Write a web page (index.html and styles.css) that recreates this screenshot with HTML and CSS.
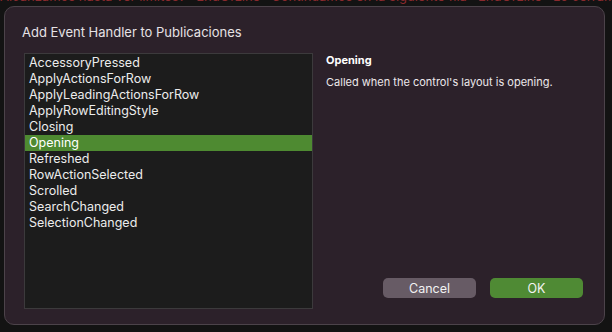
FILE: index.html
```html
<!DOCTYPE html>
<html lang="en">
<head>
  <meta charset="utf-8" />
  <title>Add Event Handler</title>
  <link rel="stylesheet" href="styles.css">
</head>
<body>
  <div class="backdrop-text">Alcanzamos hasta ver límites? · EndOfLine · Continuamos en la siguiente fila · EndOfLine · Lo cerramos</div>

  <div class="dialog">
    <div class="title">Add Event Handler to Publicaciones</div>

    <div class="content">
      <ul class="events">
        <li>AccessoryPressed</li>
        <li>ApplyActionsForRow</li>
        <li>ApplyLeadingActionsForRow</li>
        <li>ApplyRowEditingStyle</li>
        <li>Closing</li>
        <li class="selected">Opening</li>
        <li>Refreshed</li>
        <li>RowActionSelected</li>
        <li>Scrolled</li>
        <li>SearchChanged</li>
        <li>SelectionChanged</li>
      </ul>

      <div class="details">
        <div class="details-name">Opening</div>
        <div class="details-text">Called when the control's layout is opening.</div>

        <div class="buttons">
          <button class="btn cancel">Cancel</button>
          <button class="btn ok">OK</button>
        </div>
      </div>
    </div>
  </div>
</body>
</html>
```

FILE: styles.css
```css
body {
  margin: 0;
  padding: 0;
  height: 332px;
  overflow: hidden;
  background-color: #131313;
  font-family: Inter, "Liberation Sans", sans-serif;
  color: #e6e2e5;
  position: relative;
}

.backdrop-text {
  position: absolute;
  top: -12px;
  left: 0;
  white-space: nowrap;
  font-size: 13px;
  color: #8a2a2e;
}

.dialog {
  position: absolute;
  top: 6px;
  left: 4px;
  width: 599px;
  height: 317px;
  background: #2c212a;
  border: 1px solid #4c434a;
  border-radius: 10px;
  box-sizing: content-box;
}

.title {
  padding: 17px 0 0 17px;
  font-size: 13px;
  height: 29px;
}

.content {
  display: flex;
  padding-left: 19px;
}

.events {
  list-style: none;
  margin: 0;
  padding: 1px 0 0 0;
  width: 287px;
  height: 253px;
  background: #1c1c1c;
  border: 1px solid #3c3a3c;
}

.events li {
  height: 16px;
  line-height: 16px;
  padding-left: 4px;
  font-size: 12.5px;
  color: #ececec;
}

.events li.selected {
  background: #4e8a31;
  color: #ffffff;
}

.details {
  flex: 1;
  padding-left: 13px;
  display: flex;
  flex-direction: column;
}

.details-name {
  font-size: 11px;
  font-weight: bold;
  color: #ffffff;
  margin-top: 0;
}

.details-text {
  font-size: 11px;
  margin-top: 8px;
  color: #ece8eb;
}

.buttons {
  margin-top: auto;
  margin-bottom: 11px;
  display: flex;
  gap: 14px;
  padding-left: 57px;
}

.btn {
  width: 93px;
  height: 20px;
  border: none;
  border-radius: 5px;
  font-family: Inter, "Liberation Sans", sans-serif;
  font-size: 12.5px;
  color: #f2f2f2;
  padding: 0;
}

.cancel {
  background: #675b65;
}

.ok {
  background: #4f8a34;
}
```
